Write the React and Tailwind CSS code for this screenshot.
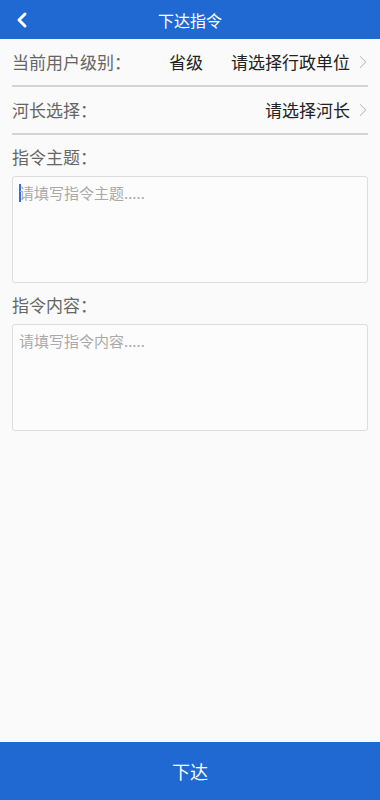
import { ChevronLeft, ChevronRight } from "lucide-react";

const font = { fontFamily: '"Noto Sans CJK SC", "Noto Sans", sans-serif' };

function SelectRow({ label, level, value }) {
    return (
        <div className="mx-3 h-12 flex items-center border-b-2 border-[#d4d4d4]">
            <span className="text-[17px] text-[#666]">{label}</span>
            <div className="flex-1" />
            {level && <span className="text-[17px] text-[#222] mr-7">{level}</span>}
            <span className="text-[17px] text-[#222]">{value}</span>
            <ChevronRight size={22} strokeWidth={1.1} className="text-[#bbb] ml-0.5 -mr-1.5" />
        </div>
    );
}

function TextBox({ label, placeholder, caret }) {
    return (
        <div className="px-3">
            <div className="h-[39px] flex items-center text-[17px] text-[#666] pt-1">{label}</div>
            <div className="h-[107px] border border-[#ddd] rounded-[3px] bg-[#fcfcfc] px-[6px] pt-[6px] mt-0.5">
                <div className="flex items-center text-[15px] text-[#aaa] leading-5">
                    {caret && <span className="w-[2px] h-[18px] bg-[#2b6fe0] -mr-[2px]" />}
                    {placeholder}
                </div>
            </div>
        </div>
    );
}

export default function App() {
    return (
        <div className="w-[380px] h-[800px] bg-[#fafafa] flex flex-col" style={font}>
            {/* header */}
            <div className="h-[39px] bg-[#2169d2] flex items-center relative shrink-0">
                <ChevronLeft size={24} strokeWidth={3} className="text-white ml-2.5" />
                <span className="absolute left-0 right-0 text-center text-white text-[16px] pointer-events-none">下达指令</span>
            </div>

            <div className="flex-1">
                <SelectRow label="当前用户级别：" level="省级" value="请选择行政单位" />
                <SelectRow label="河长选择：" value="请选择河长" />
                <TextBox label="指令主题：" placeholder="请填写指令主题....." caret />
                <TextBox label="指令内容：" placeholder="请填写指令内容....." />
            </div>

            <button className="h-[58px] bg-[#2169d2] text-white text-[18px] shrink-0">下达</button>
        </div>
    );
}
